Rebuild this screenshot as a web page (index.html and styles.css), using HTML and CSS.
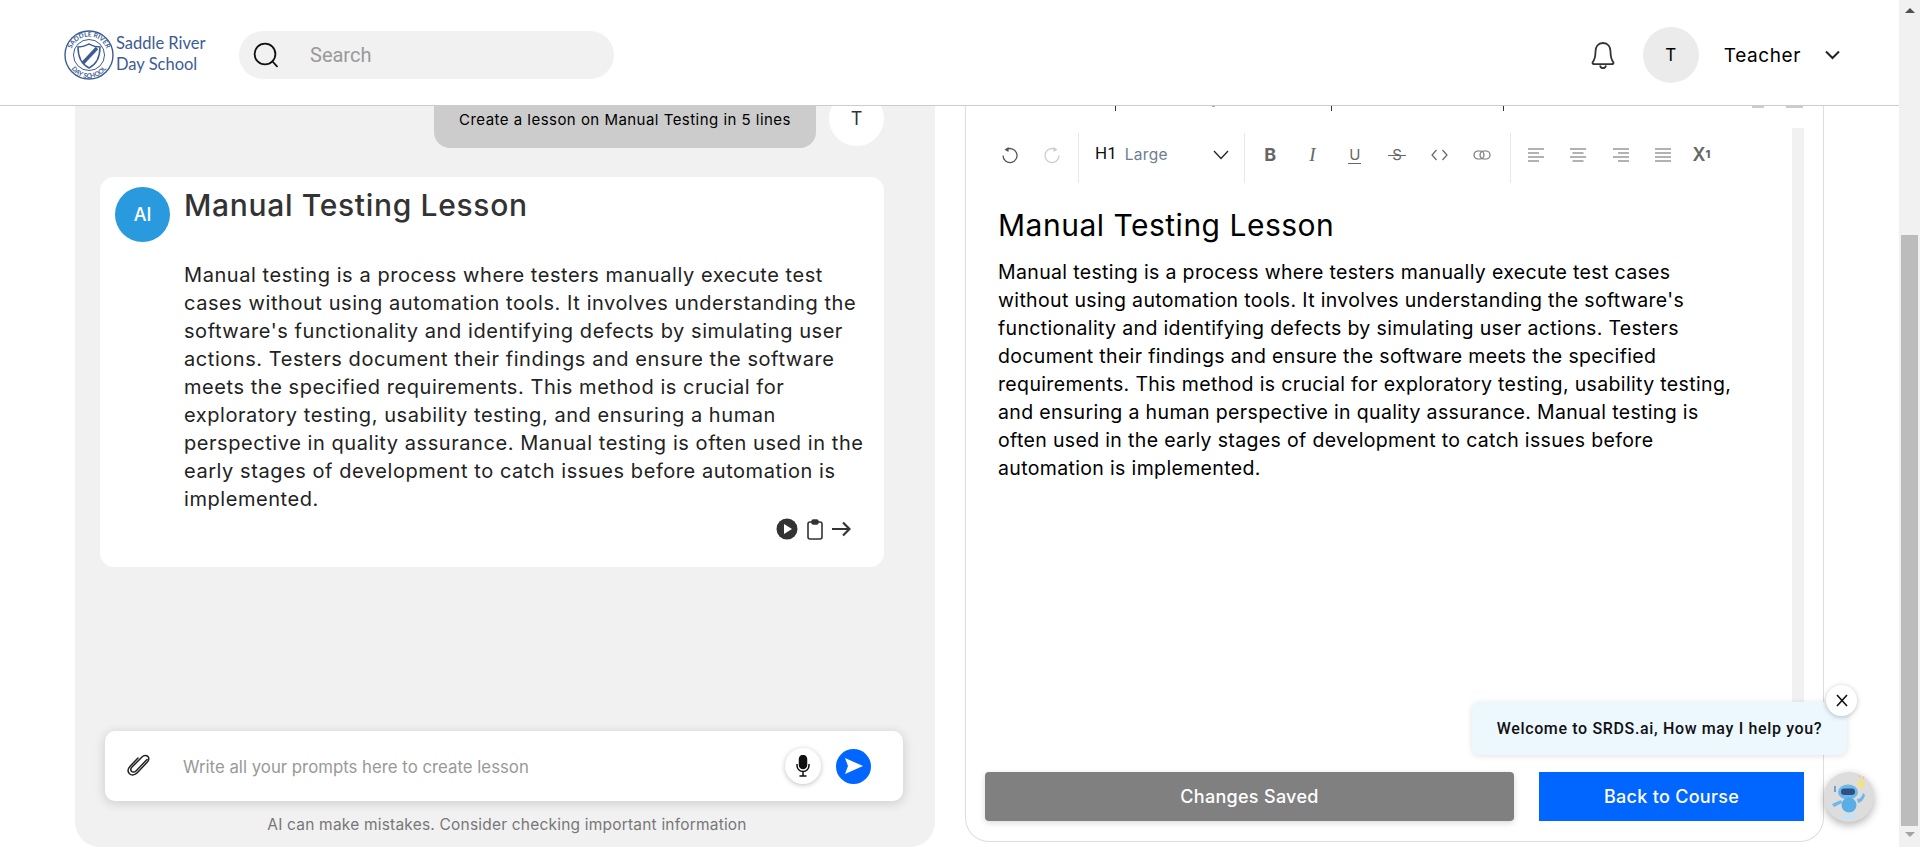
FILE: index.html
```html
<!DOCTYPE html>
<html>
    <head>
        <title>Lesson Builder</title>
        <link rel="stylesheet" href="styles.css">
    </head>
    <body>
        <div class="page">
            <div class="main">
                <header class="topbar">
                    <div class="logo">
                        <svg class="logo-seal" width="50" height="50" viewBox="0 0 50 50" fill="none" stroke="#3d5c94">
                            <defs>
                                <path id="seal-top" d="M6.5 25a18.5 18.5 0 0 1 37 0"/>
                                <path id="seal-bottom" d="M4 27a21 21 0 0 0 42 0"/>
                            </defs>
                            <circle cx="25" cy="25" r="24" stroke-width="1.4"/>
                            <circle cx="25" cy="25" r="15.5" stroke-width="1"/>
                            <text class="seal-text"><textPath href="#seal-top" startOffset="50%" text-anchor="middle">SADDLE RIVER</textPath></text>
                            <text class="seal-text"><textPath href="#seal-bottom" startOffset="50%" text-anchor="middle">DAY SCHOOL</textPath></text>
                            <path d="M14 17c6 0 9-2 11-3 2 1 5 3 11 3 0 10-3 17-11 21-8-4-11-11-11-21z" fill="#fff" stroke-width="1.5"/>
                            <path d="M19 33l14-15" stroke-width="3.4"/>
                        </svg>
                        <div class="logo-name">Saddle River<br>Day School</div>
                    </div>
                    <div class="search">
                        <svg width="26" height="26" viewBox="0 0 26 26" fill="none" stroke="#111" stroke-width="1.8" stroke-linecap="round">
                            <circle cx="12" cy="12" r="10.4"/>
                            <path d="M19.5 19.5l4.5 4.8"/>
                        </svg>
                        <span class="search-text">Search</span>
                    </div>
                    <div class="topbar-right">
                        <svg class="bell" width="24" height="29" viewBox="0 0 24 29" fill="none" stroke="#333" stroke-width="1.8" stroke-linejoin="round">
                            <path d="M12 2c-5 0-7.500 3.800-7.500 8.500 0 6-1 8.500-3 11 0 1.200.6 1.700 2 1.700h17c1.400 0 2-.5 2-1.700-2-2.500-3-5-3-11C19.500 5.800 17 2 12 2z"/>
                            <path d="M9 24.500c.5 1.800 1.500 2.700 3 2.700s2.500-.9 3-2.700"/>
                        </svg>
                        <div class="avatar-top">T</div>
                        <div class="user-name">Teacher</div>
                        <svg width="15" height="10" viewBox="0 0 15 10" fill="none" stroke="#222" stroke-width="2">
                            <path d="M1 1.500l6.500 6.500L14 1.500"/>
                        </svg>
                    </div>
                </header>
                <div class="content">
                    <section class="chat">
                        <div class="user-row">
                            <div class="user-bubble">Create a lesson on Manual Testing in 5 lines</div>
                            <div class="user-avatar">T</div>
                        </div>
                        <article class="ai-card">
                            <div class="ai-avatar">AI</div>
                            <div class="ai-body">
                                <h2 class="ai-title">Manual Testing Lesson</h2>
                                <p class="ai-text">Manual testing is a process where testers manually execute test<br>cases without using automation tools. It involves understanding the<br>software's functionality and identifying defects by simulating user<br>actions. Testers document their findings and ensure the software<br>meets the specified requirements. This method is crucial for<br>exploratory testing, usability testing, and ensuring a human<br>perspective in quality assurance. Manual testing is often used in the<br>early stages of development to catch issues before automation is<br>implemented.</p>
                                <div class="ai-actions">
                                    <svg width="22" height="22" viewBox="0 0 22 22"><circle cx="11" cy="11" r="10.500" fill="#333"/><path d="M8 6l8 5-8 5z" fill="#fff"/></svg>
                                    <svg width="16" height="21" viewBox="0 0 16 21" fill="none" stroke="#333" stroke-width="1.6"><rect x="1" y="3" width="14" height="17" rx="2"/><rect x="5" y="1" width="6" height="4" rx="1.500" fill="#333"/></svg>
                                    <svg width="19" height="16" viewBox="0 0 19 16" fill="none" stroke="#333" stroke-width="2.200"><path d="M0 8h17M11 1.500L17.500 8 11 14.500"/></svg>
                                </div>
                            </div>
                        </article>
                        <div class="prompt">
                            <svg width="28" height="24" viewBox="0 0 24 24" fill="none" stroke="#222" stroke-width="1.500" stroke-linecap="round"><path d="M20 5.500L9 17c-1.500 1.600-3.700 1.200-4.500.3-.9-1-.9-2.800.5-4.300L15 3c2-2 4.500-1.900 5.800-.6 1.400 1.300 1.400 3.700-.4 5.600L10.500 18.500c-2.600 2.700-6 3.100-8 1.200-1.900-1.900-1.700-5 .8-7.700L11 4"/></svg>
                            <span class="prompt-text">Write all your prompts here to create lesson</span>
                            <div class="mic">
                                <svg width="14" height="22" viewBox="0 0 14 22" fill="none" stroke="#111" stroke-width="1.500"><rect x="3.500" y="0.500" width="7" height="13" rx="3.500" fill="#111"/><path d="M1 9v1.500a6 6 0 0 0 12 0V9M7 16.500V21M3.500 21h7"/></svg>
                            </div>
                            <div class="send">
                                <svg width="20" height="18" viewBox="0 0 20 18"><path d="M1 1l18 8-18 8 3-8z" fill="#fff"/></svg>
                            </div>
                        </div>
                        <div class="disclaimer">AI can make mistakes. Consider checking important information</div>
                    </section>
                    <section class="editor">
                        <div class="ticks"><i></i><b></b><i></i><i></i><u></u><u></u></div>
                        <div class="editor-body">
                            <div class="editor-main">
                                <div class="toolbar">
                                    <div class="tool-group group-history">
                                        <span class="tool"><svg width="18" height="18" viewBox="0 0 18 18" fill="none" stroke="#555" stroke-width="1.300"><path d="M5 3.800a7 7 0 1 1-3 5.700"/><path d="M7.500 1v5l-4-2.300z" fill="#555" stroke="none"/></svg></span>
                                        <span class="tool"><svg width="18" height="18" viewBox="0 0 18 18" fill="none" stroke="#ccc" stroke-width="1.300"><path d="M13 3.800a7 7 0 1 0 3 5.700"/><path d="M10.500 1v5l4-2.300z" fill="#ccc" stroke="none"/></svg></span>
                                    </div>
                                    <div class="tool-group group-format">
                                        <span class="format-h">H1</span>
                                        <span class="format-name">Large</span>
                                        <svg class="format-arrow" width="16" height="10" viewBox="0 0 16 10" fill="none" stroke="#222" stroke-width="1.300"><path d="M1 1l7 7.500L15 1"/></svg>
                                    </div>
                                    <div class="tool-group group-marks">
                                        <span class="tool tool-b">B</span>
                                        <span class="tool tool-i">I</span>
                                        <span class="tool"><span class="tool-u">U</span></span>
                                        <span class="tool"><span class="tool-s">S</span></span>
                                        <span class="tool"><svg width="17" height="12" viewBox="0 0 17 12" fill="none" stroke="#666" stroke-width="1.200"><path d="M5.500 1L1 6l4.500 5M11.500 1L16 6l-4.500 5"/></svg></span>
                                        <span class="tool"><svg width="18" height="10" viewBox="0 0 18 10" fill="none" stroke="#777" stroke-width="1.200"><rect x="1" y="1" width="10" height="8" rx="4"/><rect x="7" y="1" width="10" height="8" rx="4"/></svg></span>
                                    </div>
                                    <div class="tool-group group-align">
                                        <span class="tool"><svg width="16" height="14" viewBox="0 0 16 14" stroke="#666" stroke-width="1.200"><path d="M0 1h16M0 5h11M0 9h16M0 13h11"/></svg></span>
                                        <span class="tool"><svg width="16" height="14" viewBox="0 0 16 14" stroke="#666" stroke-width="1.200"><path d="M0 1h16M2.500 5h11M0 9h16M2.500 13h11"/></svg></span>
                                        <span class="tool"><svg width="16" height="14" viewBox="0 0 16 14" stroke="#666" stroke-width="1.200"><path d="M0 1h16M5 5h11M0 9h16M5 13h11"/></svg></span>
                                        <span class="tool"><svg width="16" height="14" viewBox="0 0 16 14" stroke="#666" stroke-width="1.200"><path d="M0 1h16M0 5h16M0 9h16M0 13h16"/></svg></span>
                                        <span class="tool tool-sup">X<sup>1</sup></span>
                                    </div>
                                </div>
                                <div class="doc">
                                    <h1 class="doc-title">Manual Testing Lesson</h1>
                                    <p class="doc-text">Manual testing is a process where testers manually execute test cases<br>without using automation tools. It involves understanding the software's<br>functionality and identifying defects by simulating user actions. Testers<br>document their findings and ensure the software meets the specified<br>requirements. This method is crucial for exploratory testing, usability testing,<br>and ensuring a human perspective in quality assurance. Manual testing is<br>often used in the early stages of development to catch issues before<br>automation is implemented.</p>
                                </div>
                            </div>
                            <div class="editor-track"></div>
                        </div>
                        <div class="editor-actions">
                            <button class="btn-saved">Changes Saved</button>
                            <button class="btn-back">Back to Course</button>
                        </div>
                    </section>
                </div>
            </div>
            <div class="scrollbar">
                <span class="arrow-up"></span>
                <div class="thumb"></div>
                <span class="arrow-down"></span>
            </div>
        </div>

        <div class="toast">Welcome to SRDS.ai, How may I help you?</div>
        <div class="toast-close">
            <svg width="12" height="13" viewBox="0 0 12 13" stroke="#111" stroke-width="1.600"><path d="M1 1l10 11M11 1L1 12"/></svg>
        </div>
        <div class="bot">
            <svg width="34" height="46" viewBox="0 0 34 46">
                <circle cx="29" cy="10" r="3.500" fill="#f6e27a"/>
                <path d="M27 1l1 3M32 2l-1 3" stroke="#f6c95a" fill="none"/>
                <path d="M3 12v6" stroke="#4a8fc4" stroke-width="1.500"/>
                <ellipse cx="16" cy="18" rx="10" ry="7.500" fill="#6db8e8"/>
                <rect x="9" y="14.500" width="14" height="6.500" rx="3.200" fill="#2f4f86"/>
                <path d="M25 25c3 0 5-2 6-6l2 2c-1 4-3 7-7 8z" fill="#6db8e8"/>
                <path d="M0 30l9-4 1 3-8 4z" fill="#6db8e8"/>
                <circle cx="17" cy="31" r="7.500" fill="#5aaee6"/>
                <ellipse cx="17" cy="42.500" rx="8" ry="2.500" fill="#c4e2f7"/>
            </svg>
        </div>
    </body>
</html>
```

FILE: styles.css
```css
* {
    box-sizing: border-box;
}
html, body {
    margin: 0;
    height: 100%;
    overflow: hidden;
}
body {
    font-family: Inter, "Open Sans", sans-serif;
    color: #000;
    background-color: #fff;
}
.page {
    display: flex;
    height: 847px;
}
.main {
    flex: 1;
    min-width: 0;
    display: flex;
    flex-direction: column;
}

/* top bar */
.topbar {
    height: 106px;
    flex: none;
    display: flex;
    align-items: center;
    padding: 5px 59px 0 64px;
    border-bottom: 1px solid #ccc;
}
.logo {
    display: flex;
    align-items: center;
    width: 175px;
}
.logo-seal {
    flex: none;
}
.seal-text {
    font-family: Lato, sans-serif;
    font-size: 6.500px;
    font-weight: 700;
    fill: #3d5c94;
    stroke: none;
}
.logo-name {
    font-family: Lato, sans-serif;
    font-size: 16.500px;
    font-weight: 400;
    line-height: 21px;
    color: #3d5c94;
    margin: -2px 0 0 2px;
}
.search {
    width: 375px;
    height: 48px;
    display: flex;
    align-items: center;
    padding-left: 14px;
    border-radius: 24px;
    background-color: #f1f1f1;
}
.search-text {
    margin-left: 31px;
    font-family: Roboto, sans-serif;
    font-size: 20px;
    color: #999;
}
.topbar-right {
    margin-left: auto;
    display: flex;
    align-items: center;
}
.avatar-top {
    width: 56px;
    height: 56px;
    margin-left: 28px;
    display: flex;
    align-items: center;
    justify-content: center;
    border-radius: 50%;
    background-color: #ebebeb;
    font-size: 17px;
}
.user-name {
    margin: 0 24px 0 25px;
    font-size: 19px;
    letter-spacing: 0.6px;
}

/* content */
.content {
    flex: 1;
    min-height: 0;
    display: flex;
    padding-left: 75px;
    overflow: hidden;
}
.chat {
    width: 860px;
    flex: none;
    display: flex;
    flex-direction: column;
    padding: 0 21px 0 25px;
    border-radius: 0 0 25px 25px;
    background-color: #f1f1f1;
}
.user-row {
    display: flex;
    justify-content: flex-end;
    gap: 13px;
    margin-right: 30px;
    margin-bottom: 29px;
}
.user-bubble {
    width: 382px;
    height: 42px;
    padding-top: 4px;
    text-align: center;
    font-size: 15px;
    letter-spacing: 0.47px;
    line-height: 20px;
    border-radius: 0 0 16px 16px;
    background-color: #ccc;
}
.user-avatar {
    width: 55px;
    height: 55px;
    margin-top: -15px;
    display: flex;
    align-items: center;
    justify-content: center;
    border-radius: 50%;
    background-color: #fff;
    color: #333;
    font-size: 18px;
}
.ai-card {
    width: 784px;
    height: 390px;
    display: flex;
    padding: 10px 31px 0 15px;
    border-radius: 14px;
    background-color: #fff;
}
.ai-avatar {
    width: 55px;
    height: 55px;
    flex: none;
    display: flex;
    align-items: center;
    justify-content: center;
    border-radius: 50%;
    background-color: #2a9ade;
    color: #fff;
    font-size: 18px;
    font-weight: 500;
}
.ai-body {
    flex: 1;
    min-width: 0;
    margin-left: 14px;
}
.ai-title {
    margin: 0;
    font-size: 30px;
    letter-spacing: 0.67px;
    line-height: 36px;
    font-weight: 500;
    color: #333;
}
.ai-text {
    margin: 38px 0 0;
    font-size: 20px;
    letter-spacing: 0.56px;
    line-height: 28px;
    white-space: nowrap;
    color: #222;
}
.ai-actions {
    display: flex;
    align-items: center;
    justify-content: flex-end;
    gap: 9px;
    margin: 5px 2px 0 0;
}
.prompt {
    width: 798px;
    height: 70px;
    flex: none;
    display: flex;
    align-items: center;
    margin: auto 0 0 5px;
    padding: 0 32px 0 20px;
    border-radius: 10px;
    background-color: #fff;
    box-shadow: 0 2px 12px rgba(0, 0, 0, 0.16);
}
.prompt-text {
    margin: 2px 0 0 30px;
    font-size: 16.800px;
    color: #999;
}
.mic {
    width: 36px;
    height: 36px;
    margin-left: auto;
    display: flex;
    align-items: center;
    justify-content: center;
    border-radius: 50%;
    background-color: #fff;
    box-shadow: 0 1px 5px rgba(0, 0, 0, 0.25);
}
.send {
    width: 35px;
    height: 35px;
    margin-left: 15px;
    display: flex;
    align-items: center;
    justify-content: center;
    border-radius: 50%;
    background-color: #0066ff;
}
.disclaimer {
    height: 46px;
    flex: none;
    padding-top: 14px;
    text-align: center;
    font-size: 15.500px;
    letter-spacing: 0.2px;
    color: #777;
}

/* editor */
.editor {
    width: 859px;
    height: 736px;
    flex: none;
    display: flex;
    flex-direction: column;
    margin-left: 30px;
    padding: 0 19px 20px 0;
    border: 1px solid #ddd;
    border-top: none;
    border-radius: 0 0 24px 24px;
}
.ticks {
    height: 22px;
    flex: none;
    display: flex;
}
.ticks i {
    width: 1px;
    height: 5px;
    background-color: #333;
}
.ticks b {
    width: 3px;
    height: 1px;
    margin-left: 96px;
    background-color: #9aa7bd;
}
.ticks u {
    height: 2px;
    background-color: #ccc;
}
.ticks i:nth-child(1) {
    margin-left: 149px;
}
.ticks i:nth-child(3) {
    margin-left: 116px;
}
.ticks i:nth-child(4) {
    margin-left: 171px;
}
.ticks u:nth-child(5) {
    width: 12px;
    margin-left: 248px;
}
.ticks u:nth-child(6) {
    width: 17px;
    margin-left: 22px;
}
.editor-body {
    height: 623px;
    flex: none;
    display: flex;
}
.editor-main {
    flex: 1;
    min-width: 0;
}
.editor-track {
    width: 12px;
    background-color: #f1f1f1;
}
.toolbar {
    display: flex;
    height: 50px;
    margin-top: 5px;
    padding-left: 23px;
}
.tool-group {
    display: flex;
    align-items: center;
    padding-bottom: 7px;
    border-right: 1px solid #e8e8e8;
}
.group-history {
    width: 90px;
    padding-right: 5px;
}
.group-format {
    width: 166px;
    padding-left: 16px;
}
.group-marks {
    width: 266px;
    padding-left: 4px;
}
.group-align {
    padding-left: 4px;
    border-right: none;
}
.tool {
    width: 42.300px;
    height: 30px;
    flex: none;
    display: flex;
    align-items: center;
    justify-content: center;
    color: #666;
}
.format-h {
    font-family: Roboto, sans-serif;
    font-size: 17px;
    margin-top: -4px;
    color: #111;
}
.format-name {
    margin-left: 8px;
    font-size: 15.500px;
    letter-spacing: 0.3px;
    color: #6d7c92;
}
.format-arrow {
    margin-left: auto;
    margin-right: 15px;
}
.tool-b {
    font-size: 18px;
    font-weight: 700;
}
.tool-i {
    font-family: "Liberation Serif", serif;
    font-size: 19px;
    font-style: italic;
}
.tool-u {
    font-size: 15px;
    border-bottom: 1px solid #666;
    line-height: 17px;
    padding: 0 1px;
}
.tool-s {
    position: relative;
    font-size: 15px;
    padding: 0 4px;
}
.tool-s::after {
    content: "";
    position: absolute;
    left: 0;
    right: 0;
    top: 50%;
    height: 1px;
    background-color: #666;
}
.tool-sup {
    margin: -1px 0 0 -4px;
    font-size: 18px;
    font-weight: 600;
}
.tool-sup sup {
    font-size: 11px;
    font-weight: 800;
    line-height: 10px;
}
.doc {
    padding: 24px 0 0 32px;
}
.doc-title {
    margin: 0;
    font-size: 30px;
    letter-spacing: 0.5px;
    line-height: 36px;
    font-weight: 400;
}
.doc-text {
    margin: 15px 0 0;
    font-size: 19.500px;
    letter-spacing: 0.35px;
    line-height: 28px;
    white-space: nowrap;
}
.editor-actions {
    display: flex;
    justify-content: space-between;
    margin-top: 21px;
    padding-left: 19px;
}
.editor-actions button {
    height: 49px;
    border: none;
    color: #fff;
    font-family: Inter, sans-serif;
    font-size: 18px;
    font-weight: 500;
    letter-spacing: 0.3px;
}
.btn-saved {
    width: 529px;
    border-radius: 4px;
    background-color: #808080;
    box-shadow: 0 2px 6px rgba(0, 0, 0, 0.15);
}
.btn-back {
    width: 265px;
    background-color: #0066ff;
}

/* page scrollbar */
.scrollbar {
    width: 21px;
    flex: none;
    display: flex;
    flex-direction: column;
    align-items: center;
    background-color: #f1f1f1;
}
.arrow-up {
    margin-top: 8px;
    border: 5px solid transparent;
    border-top: none;
    border-bottom: 5px solid #505050;
}
.thumb {
    width: 17px;
    height: 591px;
    margin-top: 222px;
    background-color: #bcbcbc;
}
.arrow-down {
    margin-top: 6px;
    border: 5px solid transparent;
    border-bottom: none;
    border-top: 5px solid #a3a3a3;
}

/* chat widget, sits over the page */
.toast {
    position: absolute;
    left: 1472px;
    top: 702px;
    width: 375px;
    height: 53px;
    display: flex;
    align-items: center;
    justify-content: center;
    border-radius: 8px;
    background-color: #ecf7fe;
    box-shadow: 0 1px 6px rgba(0, 0, 0, 0.12);
    font-family: Roboto, sans-serif;
    font-size: 16px;
    font-weight: 500;
    letter-spacing: 0.65px;
    color: #111;
}
.toast-close {
    position: absolute;
    left: 1826px;
    top: 685px;
    width: 31px;
    height: 31px;
    display: flex;
    align-items: center;
    justify-content: center;
    border-radius: 50%;
    background-color: #fff;
    box-shadow: 0 1px 5px rgba(0, 0, 0, 0.25);
}
.bot {
    position: absolute;
    left: 1824px;
    top: 772px;
    width: 50px;
    height: 50px;
    display: flex;
    align-items: center;
    justify-content: center;
    border-radius: 50%;
    background-color: #ddd;
    box-shadow: 0 3px 8px rgba(0, 0, 0, 0.3);
}
```
